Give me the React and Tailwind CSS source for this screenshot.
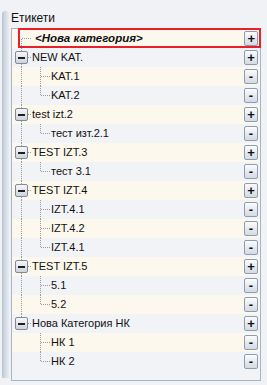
const tree = [
  { name: 'NEW KAT.', children: ['KAT.1', 'KAT.2'] },
  { name: 'test izt.2', children: ['тест изт.2.1'] },
  { name: 'TEST IZT.3', children: ['тест 3.1'] },
  { name: 'TEST IZT.4', children: ['IZT.4.1', 'IZT.4.2', 'IZT.4.1'] },
  { name: 'TEST IZT.5', children: ['5.1', '5.2'] },
  { name: 'Нова Категория НК', children: ['НК 1', 'НК 2'] },
];

const dot = { stroke: '#9a9a9a', strokeWidth: 1, strokeDasharray: '1 1' };

function Lines({ kind, lastRoot, lastChild }) {
  // dotted tree connectors, drawn in row-local coords
  return (
    <svg className="absolute left-0 top-0" width="40" height="19">
      {kind === 'new' && (
        <>
          <line x1="9.5" y1="10" x2="9.5" y2="19" {...dot} />
          <line x1="10" y1="9.5" x2="20" y2="9.5" {...dot} />
        </>
      )}
      {kind === 'root' && (
        <>
          <line x1="9.5" y1="0" x2="9.5" y2={lastRoot ? 4 : 19} {...dot} />
          <line x1="16" y1="9.5" x2="20" y2="9.5" {...dot} />
        </>
      )}
      {kind === 'child' && (
        <>
          {!lastRoot && <line x1="9.5" y1="0" x2="9.5" y2="19" {...dot} />}
          <line x1="28.5" y1="0" x2="28.5" y2={lastChild ? 10 : 19} {...dot} />
          <line x1="29" y1="9.5" x2="38" y2="9.5" {...dot} />
        </>
      )}
    </svg>
  );
}

function Btn({ children, italic }) {
  return (
    <div className="ml-auto mr-[2px] w-[14px] h-[15px] flex items-center justify-center rounded-[2px] border border-[#8e9cb1] bg-gradient-to-b from-[#fbfcfd] to-[#d3dae3] text-[#111] shrink-0">
      <span className={`text-[13px] leading-none ${italic ? 'italic font-bold' : 'font-semibold'}`}>{children}</span>
    </div>
  );
}

function Row({ index, children }) {
  const bg = index % 2 === 0 ? 'bg-[#fdf8ed]' : 'bg-[#f2f3f6]';
  return <div className={`relative h-[19px] flex items-center ${bg}`}>{children}</div>;
}

export default function App() {
  let i = 1;
  const rows = [];
  tree.forEach((node, r) => {
    const lastRoot = r === tree.length - 1;
    rows.push(
      <Row key={`r${r}`} index={i++}>
        <Lines kind="root" lastRoot={lastRoot} />
        <div className="absolute left-[3px] top-[3px] w-[13px] h-[13px] rounded-[2px] border border-[#7f8b9b] bg-gradient-to-b from-[#f7f8fa] to-[#cdd3db] flex items-center justify-center">
          <div className="w-[7px] h-[2px] bg-[#1e1e1e]" />
        </div>
        <span className="pl-[20px]">{node.name}</span>
        <Btn>+</Btn>
      </Row>
    );
    node.children.forEach((c, k) => {
      rows.push(
        <Row key={`c${r}-${k}`} index={i++}>
          <Lines kind="child" lastRoot={lastRoot} lastChild={k === node.children.length - 1} />
          <span className="pl-[39px]">{c}</span>
          <Btn>-</Btn>
        </Row>
      );
    });
  });

  return (
    <div className="w-[267px] h-[385px] bg-[#f0f2f5] flex text-[11px] text-[#111] overflow-hidden" style={{ fontFamily: '"Liberation Sans", Arial, sans-serif' }}>
      <div className="w-[11px] shrink-0 pt-[11px] pl-[2px]">
        <div className="w-[7px] h-[367px] rounded-t-[3px] rounded-b-[1px] bg-gradient-to-r from-[#b9c4d2] via-[#d5dce5] to-[#e8ecf1]" />
      </div>
      <div className="pt-[11px]">
        <div className="h-[17px] leading-[15px] text-[12px]">Етикети</div>
        <div className="w-[250px] h-[353px] border border-[#a7b4c6] bg-[#f2f3f6]">
          <Row index={0}>
            <Lines kind="new" />
            <div className="absolute left-[6px] -right-px -top-px bottom-0 border-2 border-[#e8202a]" />
            <span className="pl-[23px] font-bold italic text-[11.5px]">&lt;Нова категория&gt;</span>
            <Btn italic>+</Btn>
          </Row>
          {rows}
        </div>
      </div>
    </div>
  );
}
